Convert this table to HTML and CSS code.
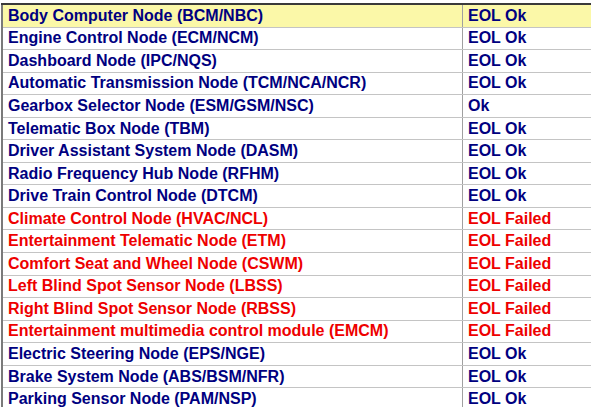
FILE: index.html
```html
<!DOCTYPE html>
<html>
<head>
<meta charset="utf-8">
<link rel="stylesheet" href="styles.css">
</head>
<body>
<table class="status">
<tr class="hl"><td class="name">Body Computer Node (BCM/NBC)</td><td class="res">EOL Ok</td></tr>
<tr><td class="name">Engine Control Node (ECM/NCM)</td><td class="res">EOL Ok</td></tr>
<tr><td class="name">Dashboard Node (IPC/NQS)</td><td class="res">EOL Ok</td></tr>
<tr><td class="name">Automatic Transmission Node (TCM/NCA/NCR)</td><td class="res">EOL Ok</td></tr>
<tr><td class="name">Gearbox Selector Node (ESM/GSM/NSC)</td><td class="res">Ok</td></tr>
<tr><td class="name">Telematic Box Node (TBM)</td><td class="res">EOL Ok</td></tr>
<tr><td class="name">Driver Assistant System Node (DASM)</td><td class="res">EOL Ok</td></tr>
<tr><td class="name">Radio Frequency Hub Node (RFHM)</td><td class="res">EOL Ok</td></tr>
<tr><td class="name">Drive Train Control Node (DTCM)</td><td class="res">EOL Ok</td></tr>
<tr class="fail"><td class="name">Climate Control Node (HVAC/NCL)</td><td class="res">EOL Failed</td></tr>
<tr class="fail"><td class="name">Entertainment Telematic Node (ETM)</td><td class="res">EOL Failed</td></tr>
<tr class="fail"><td class="name">Comfort Seat and Wheel Node (CSWM)</td><td class="res">EOL Failed</td></tr>
<tr class="fail"><td class="name">Left Blind Spot Sensor Node (LBSS)</td><td class="res">EOL Failed</td></tr>
<tr class="fail"><td class="name">Right Blind Spot Sensor Node (RBSS)</td><td class="res">EOL Failed</td></tr>
<tr class="fail"><td class="name">Entertainment multimedia control module (EMCM)</td><td class="res">EOL Failed</td></tr>
<tr><td class="name">Electric Steering Node (EPS/NGE)</td><td class="res">EOL Ok</td></tr>
<tr><td class="name">Brake System Node (ABS/BSM/NFR)</td><td class="res">EOL Ok</td></tr>
<tr><td class="name">Parking Sensor Node (PAM/NSP)</td><td class="res">EOL Ok</td></tr>
</table>
</body>
</html>
```
FILE: styles.css
```css
html, body {
  margin: 0;
  padding: 0;
  background: #ffffff;
  overflow: hidden;
}
body {
  padding-top: 3px;
}
.status {
  border-collapse: collapse;
  width: 590px;
  margin-left: 1px;
  border-top: 2px solid #3a3a3a;
  border-left: 2px solid #7a7a7a;
  font-family: "Liberation Sans", Arial, sans-serif;
  font-weight: bold;
  font-size: 16px;
  color: #000080;
}
.status td {
  height: 21.55px;
  padding: 0 0 0 5px;
  border-bottom: 1px solid #c4c4c4;
  line-height: 18px;
  vertical-align: middle;
  white-space: nowrap;
}
.status td.name {
  width: 454px;
  border-right: 1px solid #a0a0a0;
}
.status tr.hl td {
  background: #fbf8a8;
}
.status tr.fail td {
  color: #ee0000;
}
```
